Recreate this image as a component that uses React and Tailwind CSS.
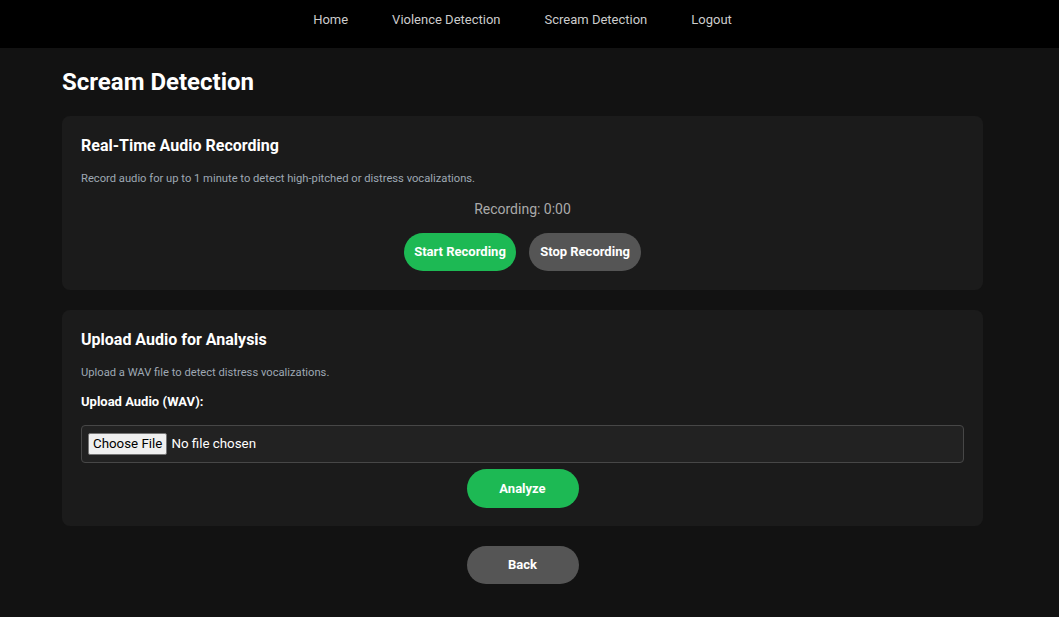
export default function App() {
  return (
    <div className="min-h-screen bg-[#121212] text-white" style={{ fontFamily: "Roboto, 'Liberation Sans', sans-serif" }}>
      <nav className="h-12 bg-black flex justify-center gap-[44px] pt-[12px] pr-[14px] text-[13px] leading-4 text-[#cccccc]">
        <a href="#">Home</a>
        <a href="#">Violence Detection</a>
        <a href="#">Scream Detection</a>
        <a href="#">Logout</a>
      </nav>

      <main className="pl-[62px] pr-[76px] pt-5 pb-8">
        <h1 className="text-2xl leading-7 font-bold mb-5">Scream Detection</h1>

        <section className="bg-[#1b1b1b] rounded-lg px-[19px] pt-5 pb-[19px] mb-5">
          <h2 className="text-base leading-5 font-bold">Real-Time Audio Recording</h2>
          <p className="text-[11.2px] leading-4 text-[#9ea8b3] mt-[15px]">
            Record audio for up to 1 minute to detect high-pitched or distress vocalizations.
          </p>
          <div className="text-center text-sm leading-5 text-[#aaaaaa] mt-[12px]">Recording: 0:00</div>
          <div className="flex justify-center gap-[13px] mt-[14px]">
            <Btn color="bg-[#1db954]">Start Recording</Btn>
            <Btn color="bg-[#555555]">Stop Recording</Btn>
          </div>
        </section>

        <section className="bg-[#1b1b1b] rounded-lg px-[19px] pt-5 pb-[18px] mb-5">
          <h2 className="text-base leading-5 font-bold">Upload Audio for Analysis</h2>
          <p className="text-[11.2px] leading-4 text-[#9ea8b3] mt-[15px]">
            Upload a WAV file to detect distress vocalizations.
          </p>
          <label className="block text-[13px] leading-4 font-bold mt-[13px]">Upload Audio (WAV):</label>
          <div className="mt-[15px] h-[38px] bg-[#222222] border border-[#474747] rounded flex items-center px-[6px] text-[13.33px]">
            <span className="h-[22px] px-[4px] flex items-center bg-[#efefef] text-black border border-[#767676] rounded-[2px]">Choose File</span>
            <span className="ml-[4px] text-white">No file chosen</span>
          </div>
          <div className="flex justify-center mt-[6px]">
            <Btn color="bg-[#1db954]" h="h-[39px]">Analyze</Btn>
          </div>
        </section>

        <div className="flex justify-center">
          <Btn color="bg-[#555555]">Back</Btn>
        </div>
      </main>
    </div>
  );
}

function Btn({ color, h = "h-[38px]", children }) {
  return (
    <button className={`${color} ${h} w-[112px] rounded-full text-[13px] font-bold text-white`}>
      {children}
    </button>
  );
}
